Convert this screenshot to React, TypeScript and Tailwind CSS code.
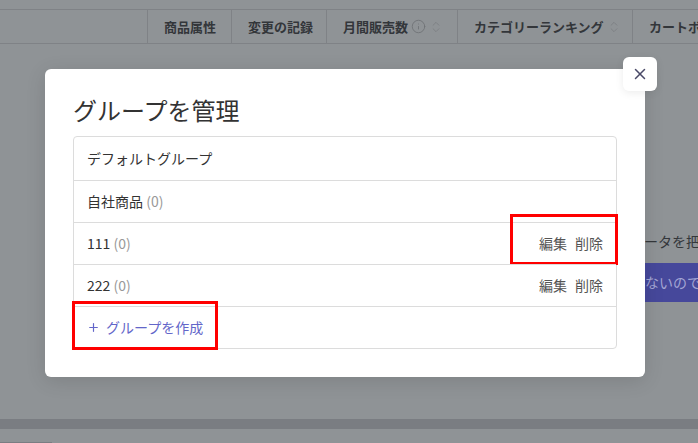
import { X, Plus, Info, ChevronsUpDown } from 'lucide-react';

const FONT = { fontFamily: '"Noto Sans CJK JP", "Noto Sans", sans-serif' };

const HEADERS = [
  { label: '商品属性', w: 'w-[84px]' },
  { label: '変更の記録', w: 'w-[95px]' },
  { label: '月間販売数', w: 'w-[131px]', info: true, sort: true },
  { label: 'カテゴリーランキング', w: 'w-[175px]', sort: true },
  { label: 'カートボックス', w: 'w-[120px]' },
];

const GROUPS = [
  { name: 'デフォルトグループ', count: null, actions: false },
  { name: '自社商品', count: 0, actions: false },
  { name: '111', count: 0, actions: true, marked: true },
  { name: '222', count: 0, actions: true },
];

function HeaderRow() {
  return (
    <div className="mt-[9px] flex h-[35px] border-y border-[#7f8286] pl-[147px]">
      {HEADERS.map((h) => (
        <div
          key={h.label}
          className={`${h.w} flex shrink-0 items-center gap-[3px] whitespace-nowrap border-l border-[#7f8286] pl-4 text-[13px] font-bold text-[#33363a]`}
        >
          {h.label}
          {h.info && <Info size={15} strokeWidth={1.4} className="shrink-0 text-[#6f7276]" />}
          {h.sort && <ChevronsUpDown size={14} strokeWidth={1.4} className="shrink-0 text-[#7a7d81]" />}
        </div>
      ))}
    </div>
  );
}

function GroupModal() {
  return (
    <div className="absolute left-[45px] top-[69px] h-[308px] w-[600px] rounded-md bg-white px-7 pt-6 shadow-[0_4px_20px_rgba(0,0,0,0.12)]">
      <h2 className="text-[24px] leading-[34px] text-[#333]">グループを管理</h2>
      <div className="mt-[9px] rounded border border-[#dcdcdc]">
        {GROUPS.map((g, i) => (
          <div
            key={g.name}
            className={`relative flex h-[42px] items-center justify-between px-[13px] text-[14px] text-[#333] ${
              i === 0 ? 'h-[43px]' : 'border-t border-[#dcdcdc]'
            }`}
          >
            <span>
              {g.name}
              {g.count !== null && <span className="text-[#999]"> ({g.count})</span>}
            </span>
            {g.actions && (
              <span className="flex gap-2 text-[#555]">
                <span>編集</span>
                <span>削除</span>
              </span>
            )}
            {g.marked && (
              <div className="absolute right-[-2px] top-[-9px] h-[51px] w-[108px] border-[3px] border-[#ff0000]" />
            )}
          </div>
        ))}
        <div className="relative flex h-[42px] items-center gap-1.5 border-t border-[#dcdcdc] px-[13px] text-[14px] text-[#6366c9]">
          <Plus size={13} strokeWidth={2.2} />
          <span>グループを作成</span>
          <div className="absolute left-[-2px] top-[-6px] h-[49px] w-[146px] border-[3px] border-[#ff0000]" />
        </div>
      </div>
      <button className="absolute right-[-12px] top-[-12px] flex h-[34px] w-[34px] items-center justify-center rounded-md bg-white shadow-[0_2px_8px_rgba(0,0,0,0.08)]">
        <X size={18} strokeWidth={2} className="text-[#4a4a68]" />
      </button>
    </div>
  );
}

export default function App() {
  return (
    <div className="relative h-[443px] w-[698px] overflow-hidden bg-[#8f9396]" style={FONT}>
      <HeaderRow />

      <div className="flex flex-col items-start pl-[630px] pt-[187px]">
        <span className="whitespace-nowrap text-[14px] text-[#34373b]">データを把握</span>
        <div className="mt-[11px] flex h-[39px] w-[100px] items-center whitespace-nowrap bg-[#46489b] pl-[15px] text-[14px] text-[#a3a5d4]">
          ないので
        </div>
      </div>

      <div className="mt-[117px] h-[10px] bg-[#7a7d82]" />
      <div className="mt-[13px] h-[10px] w-[52px] border border-[#7a7d82]" />

      <GroupModal />
    </div>
  );
}
